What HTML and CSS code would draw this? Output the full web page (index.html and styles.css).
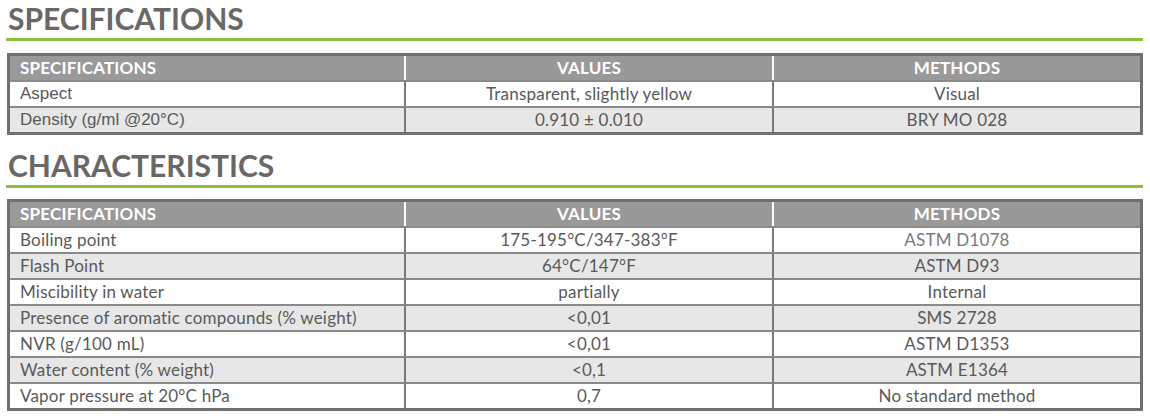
FILE: index.html
```html
<!DOCTYPE html>
<html lang="en">
<head>
<meta charset="utf-8">
<title>Specifications</title>
<link rel="stylesheet" href="styles.css">
</head>
<body>
<div class="page">
  <h2 class="section-title">SPECIFICATIONS</h2>
  <table class="spec-table">
    <colgroup><col class="c1"><col class="c2"><col class="c3"></colgroup>
    <thead>
      <tr><th class="left">SPECIFICATIONS</th><th>VALUES</th><th>METHODS</th></tr>
    </thead>
    <tbody>
      <tr><td class="left arial">Aspect</td><td>Transparent, slightly yellow</td><td>Visual</td></tr>
      <tr class="alt"><td class="left arial">Density (g/ml @20°C)</td><td>0.910 ± 0.010</td><td>BRY MO 028</td></tr>
    </tbody>
  </table>

  <h2 class="section-title second">CHARACTERISTICS</h2>
  <table class="spec-table">
    <colgroup><col class="c1"><col class="c2"><col class="c3"></colgroup>
    <thead>
      <tr><th class="left">SPECIFICATIONS</th><th>VALUES</th><th>METHODS</th></tr>
    </thead>
    <tbody>
      <tr><td class="left">Boiling point</td><td>175-195°C/347-383°F</td><td class="light">ASTM D1078</td></tr>
      <tr class="alt"><td class="left">Flash Point</td><td>64°C/147°F</td><td>ASTM D93</td></tr>
      <tr><td class="left">Miscibility in water</td><td>partially</td><td>Internal</td></tr>
      <tr class="alt"><td class="left">Presence of aromatic compounds (% weight)</td><td>&lt;0,01</td><td>SMS 2728</td></tr>
      <tr><td class="left">NVR (g/100 mL)</td><td>&lt;0,01</td><td>ASTM D1353</td></tr>
      <tr class="alt"><td class="left">Water content (% weight)</td><td>&lt;0,1</td><td>ASTM E1364</td></tr>
      <tr><td class="left">Vapor pressure at 20°C hPa</td><td>0,7</td><td>No standard method</td></tr>
    </tbody>
  </table>
</div>
</body>
</html>
```

FILE: styles.css
```css
* { box-sizing: border-box; }

html, body {
  margin: 0;
  padding: 0;
  background: #ffffff;
}

body {
  font-family: Lato, "Open Sans", "Liberation Sans", sans-serif;
  color: #555555;
}

.page {
  width: 1150px;
  padding: 0 7px 0 6px;
}

.section-title {
  margin: 0;
  padding: 0 0 2px 2px;
  font-size: 30px;
  line-height: 36px;
  font-weight: 700;
  color: #6a6766;
  border-bottom: 3px solid #8dbf3e;
}

.section-title.second {
  margin-top: 12px;
}

.spec-table {
  width: 1136px;
  margin: 12px 0 0 1px;
  border-collapse: separate;
  border-spacing: 0;
  border: 3px solid #6f6f6f;
  table-layout: fixed;
  font-size: 17px;
  letter-spacing: 0.2px;
}

.section-title.second + .spec-table {
  margin-top: 11px;
}

.spec-table .c1 { width: 394px; }
.spec-table .c2 { width: 368px; }
.spec-table .c3 { width: auto; }

.spec-table th,
.spec-table td {
  height: 24px;
  padding: 0 8px;
  text-align: center;
  vertical-align: middle;
  white-space: nowrap;
  line-height: 20px;
}

.spec-table th {
  background: #999999;
  color: #ffffff;
  font-weight: 700;
  font-size: 17px;
  padding-bottom: 1px;
}

.spec-table th + th {
  border-left: 2px solid #ffffff;
}

.spec-table td {
  border-top: 2px solid #8a8a8a;
  background: #ffffff;
  color: #595959;
  height: 26px;
}

.spec-table td + td {
  border-left: 2px solid #7a7a7a;
}

.spec-table tr.alt td {
  background: #e7e7e7;
}

.spec-table .left {
  text-align: left;
  padding-left: 10px;
}

.spec-table td.arial {
  font-family: "Liberation Sans", Arial, sans-serif;
  letter-spacing: 0;
  font-size: 17px;
}

.spec-table td.light {
  color: #7a7a7a;
}
```
